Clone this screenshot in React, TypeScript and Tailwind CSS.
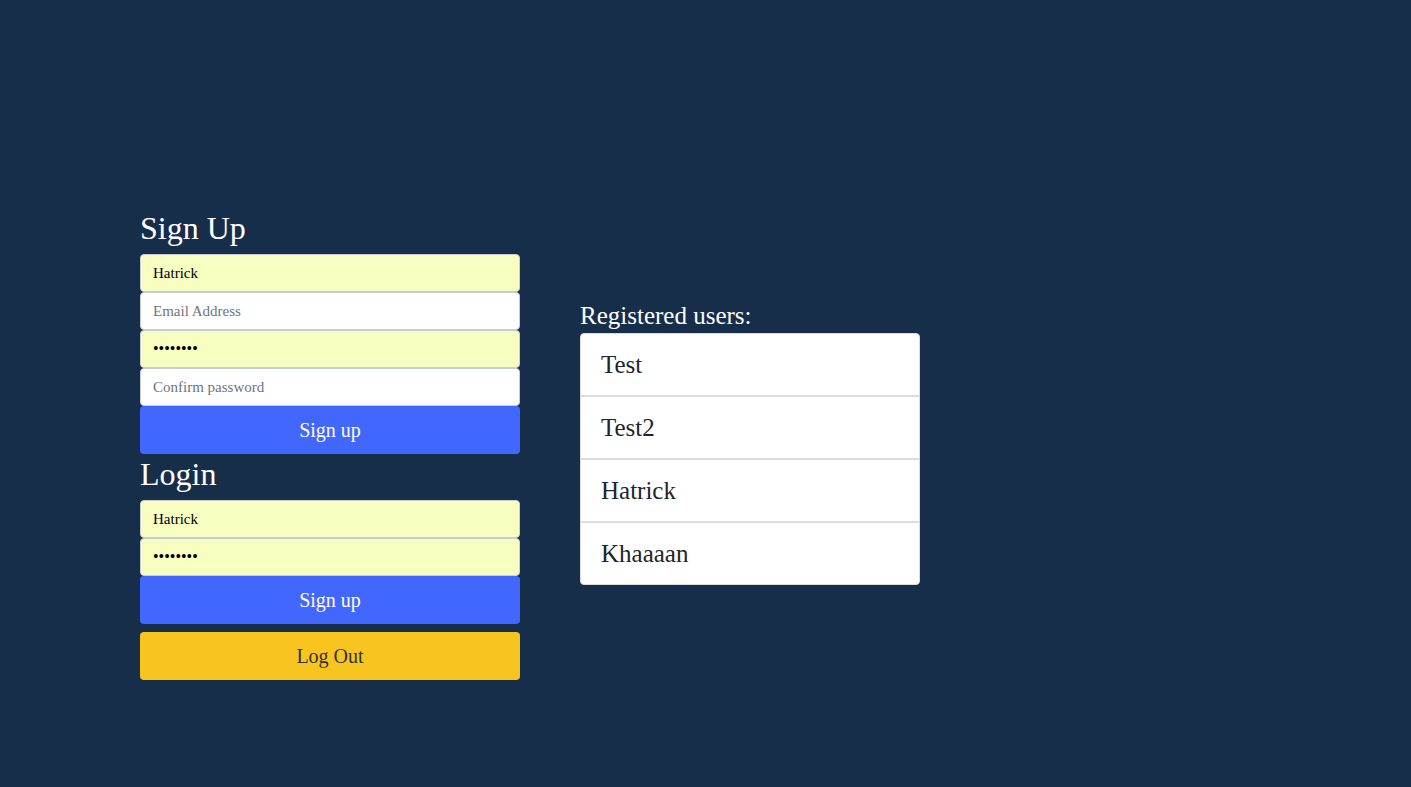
import React from "react";

const serif = { fontFamily: '"Liberation Serif", "Times New Roman", serif' };

function Field({ value, placeholder, filled, password }: { value?: string; placeholder?: string; filled?: boolean; password?: boolean }) {
  return (
    <input
      readOnly
      type={password ? "password" : "text"}
      value={value ?? ""}
      placeholder={placeholder}
      className={`block w-full h-[38px] rounded-[4px] border border-[#c8ccd4] px-[12px] ${password ? "text-[16px]" : "text-[15px]"} text-black placeholder:text-[#6c757d] outline-none ${filled ? "bg-[#f8fdc0]" : "bg-white"}`}
      style={serif}
    />
  );
}

export default function App() {
  const users = ["Test", "Test2", "Hatrick", "Khaaaan"];
  return (
    <div className="min-h-[787px] w-full bg-[#172e4b]" style={serif}>
      <div className="flex items-start pl-[140px] pt-[210px] gap-[60px]">
        <div className="w-[380px] flex flex-col">
          <h1 className="text-[32px] leading-[36px] text-white mb-[8px]">Sign Up</h1>
          <Field value="Hatrick" filled />
          <Field placeholder="Email Address" />
          <Field value="password" filled password />
          <Field placeholder="Confirm password" />
          <button className="h-[48px] w-full rounded-[4px] bg-[#4267fe] text-white text-[20px]">Sign up</button>
          <h1 className="text-[32px] leading-[36px] text-white mt-[2px] mb-[8px]">Login</h1>
          <Field value="Hatrick" filled />
          <Field value="password" filled password />
          <button className="h-[48px] w-full rounded-[4px] bg-[#4267fe] text-white text-[20px]">Sign up</button>
          <button className="mt-[8px] h-[48px] w-full rounded-[4px] bg-[#f8c520] text-[#333] text-[20px]">Log Out</button>
        </div>
        <div className="w-[340px] mt-[91px] flex flex-col">
          <div className="text-[25px] leading-[29px] text-white mb-[3px]">Registered users:</div>
          <ul className="rounded-[4px] border border-[#dcdcdc] bg-white overflow-hidden">
            {users.map((u, i) => (
              <li
                key={u}
                className={`flex items-center pl-[20px] text-[25px] text-[#212529] ${i > 0 ? "h-[63px] border-t-2 border-[#dcdcdc]" : "h-[61px]"}`}
              >
                {u}
              </li>
            ))}
          </ul>
        </div>
      </div>
    </div>
  );
}
